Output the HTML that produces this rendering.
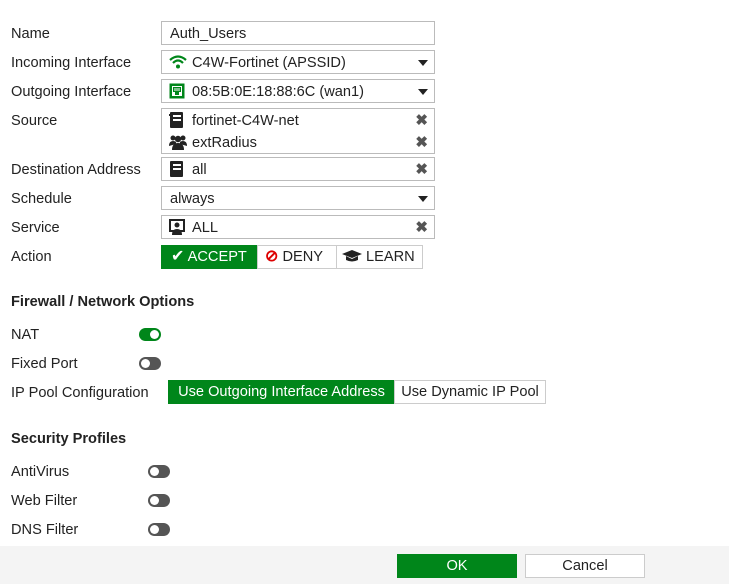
<!DOCTYPE html>
<html><head><meta charset="utf-8"><style>
*{box-sizing:border-box;margin:0;padding:0}
body{width:729px;height:584px;background:#fff;font-family:"Liberation Sans",sans-serif;font-size:14.6px;color:#222;position:relative;overflow:hidden}
.a{position:absolute}
.lbl{position:absolute;left:11px;line-height:16px}
.box{position:absolute;left:161px;width:274px;border:1px solid #bbb;background:#fff}
.box .t{position:absolute;left:30px;line-height:16px}
.box .ic{position:absolute;left:7px}
.caret{position:absolute;right:6px;top:9px;width:0;height:0;border-left:5.5px solid transparent;border-right:5.5px solid transparent;border-top:6px solid #222}
.x{position:absolute;right:6px;font-size:15px;color:#555;font-weight:bold;line-height:16px}
.tog{position:absolute;width:22px;height:13px;border-radius:7px;background:#555}
.tog::after{content:"";position:absolute;left:2px;top:2px;width:9px;height:9px;border-radius:50%;background:#fff}
.tog.on{background:#00861a}
.tog.on::after{left:11px}
h3{position:absolute;left:11px;font-size:14.6px;font-weight:bold;line-height:16px}
.btn{position:absolute;height:24px;line-height:22px;text-align:center;border:1px solid #ccc;background:#fff}
.g{background:#00861a;color:#fff;border-color:#00861a}
</style></head><body>
<div class="lbl" style="top:26px">Name</div>
<div class="box" style="top:21px;height:24px"><div class="t" style="left:8px;top:4px">Auth_Users</div></div>

<div class="lbl" style="top:55px">Incoming Interface</div>
<div class="box" style="top:50px;height:24px">
<svg class="ic" style="top:4px" width="18" height="14" viewBox="0 0 18 14"><path d="M1 5Q9-2 17 5" stroke="#00861a" stroke-width="2.2" fill="none"/><path d="M4 8Q9 3 14 8" stroke="#00861a" stroke-width="2.2" fill="none"/><circle cx="9" cy="11.5" r="2" fill="#00861a"/></svg>
<div class="t" style="top:4px">C4W-Fortinet (APSSID)</div><div class="caret"></div></div>

<div class="lbl" style="top:84px">Outgoing Interface</div>
<div class="box" style="top:79px;height:24px">
<svg class="ic" style="top:3px" width="16" height="16" viewBox="0 0 16 16"><rect x="0.5" y="0.5" width="15" height="15" fill="#00861a"/><rect x="3" y="3" width="10" height="10" fill="#fff"/><path d="M4 4h8v5h-2v3H6V9H4z" fill="#00861a"/><path d="M6 5v3M8 5v3M10 5v3" stroke="#fff" stroke-width="1"/></svg>
<div class="t" style="top:4px">08:5B:0E:18:88:6C (wan1)</div><div class="caret"></div></div>

<div class="lbl" style="top:113px">Source</div>
<div class="box" style="top:108px;height:46px">
<svg class="ic" style="top:3px" width="14" height="16" viewBox="0 0 14 16"><rect x="1" y="0" width="13" height="16" rx="1" fill="#222"/><rect x="4" y="3" width="8" height="2" fill="#fff"/><rect x="4" y="7" width="8" height="2" fill="#fff"/><rect x="0" y="2" width="2" height="2" fill="#222"/></svg>
<div class="t" style="top:4px">fortinet-C4W-net</div><div class="x" style="top:4px">✖</div>
<svg class="ic" style="top:25px" width="18" height="16" viewBox="0 0 18 16"><circle cx="4" cy="4" r="2.5" fill="#222"/><circle cx="14" cy="4" r="2.5" fill="#222"/><circle cx="9" cy="5" r="3.2" fill="#222"/><path d="M0 12q0-5 4-5t3 3M18 12q0-5-4-5t-3 3" fill="#222"/><path d="M3 16q0-7 6-7t6 7z" fill="#222"/></svg>
<div class="t" style="top:26px">extRadius</div><div class="x" style="top:26px">✖</div></div>

<div class="lbl" style="top:162px">Destination Address</div>
<div class="box" style="top:157px;height:24px">
<svg class="ic" style="top:3px" width="14" height="16" viewBox="0 0 14 16"><rect x="1" y="0" width="13" height="16" rx="1" fill="#222"/><rect x="4" y="3" width="8" height="2" fill="#fff"/><rect x="4" y="7" width="8" height="2" fill="#fff"/></svg>
<div class="t" style="top:4px">all</div><div class="x" style="top:4px">✖</div></div>

<div class="lbl" style="top:191px">Schedule</div>
<div class="box" style="top:186px;height:24px"><div class="t" style="left:8px;top:4px">always</div><div class="caret"></div></div>

<div class="lbl" style="top:220px">Service</div>
<div class="box" style="top:215px;height:24px">
<svg class="ic" style="top:3px" width="16" height="16" viewBox="0 0 16 16"><rect x="0" y="0" width="16" height="13" fill="#222"/><rect x="2" y="2" width="12" height="9" fill="#fff"/><circle cx="8" cy="6" r="2.5" fill="#222"/><path d="M3 16q0-6 5-6t5 6z" fill="#222"/></svg>
<div class="t" style="top:4px">ALL</div><div class="x" style="top:4px">✖</div></div>

<div class="lbl" style="top:249px">Action</div>
<div class="btn g" style="left:161px;top:245px;width:96px;text-align:left;padding-left:9px"><span style="font-size:16px">✔</span> ACCEPT</div>
<div class="btn" style="left:257px;top:245px;width:80px;text-align:left;padding-left:7px"><span style="color:#d00;font-weight:bold;font-size:16px">⊘</span> DENY</div>
<div class="btn" style="left:336px;top:245px;width:87px;text-align:left;padding-left:5px"><svg width="20" height="12" viewBox="0 0 20 12" style="vertical-align:-1px"><path d="M10 0L20 4 10 8 0 4z" fill="#222"/><path d="M4 6v4q6 3 12 0V6l-6 3z" fill="#222"/></svg> LEARN</div>

<h3 style="top:294px">Firewall / Network Options</h3>
<div class="lbl" style="top:327px">NAT</div><div class="tog on" style="left:139px;top:328px"></div>
<div class="lbl" style="top:356px">Fixed Port</div><div class="tog" style="left:139px;top:357px"></div>
<div class="lbl" style="top:385px">IP Pool Configuration</div>
<div class="btn g" style="left:168px;top:380px;width:227px">Use Outgoing Interface Address</div>
<div class="btn" style="left:394px;top:380px;width:152px">Use Dynamic IP Pool</div>

<h3 style="top:431px">Security Profiles</h3>
<div class="lbl" style="top:464px">AntiVirus</div><div class="tog" style="left:148px;top:465px"></div>
<div class="lbl" style="top:493px">Web Filter</div><div class="tog" style="left:148px;top:494px"></div>
<div class="lbl" style="top:522px">DNS Filter</div><div class="tog" style="left:148px;top:523px"></div>

<div class="a" style="left:0;top:546px;width:729px;height:38px;background:#f4f4f4"></div>
<div class="btn g" style="left:397px;top:554px;width:120px">OK</div>
<div class="btn" style="left:525px;top:554px;width:120px">Cancel</div>
</body></html>
